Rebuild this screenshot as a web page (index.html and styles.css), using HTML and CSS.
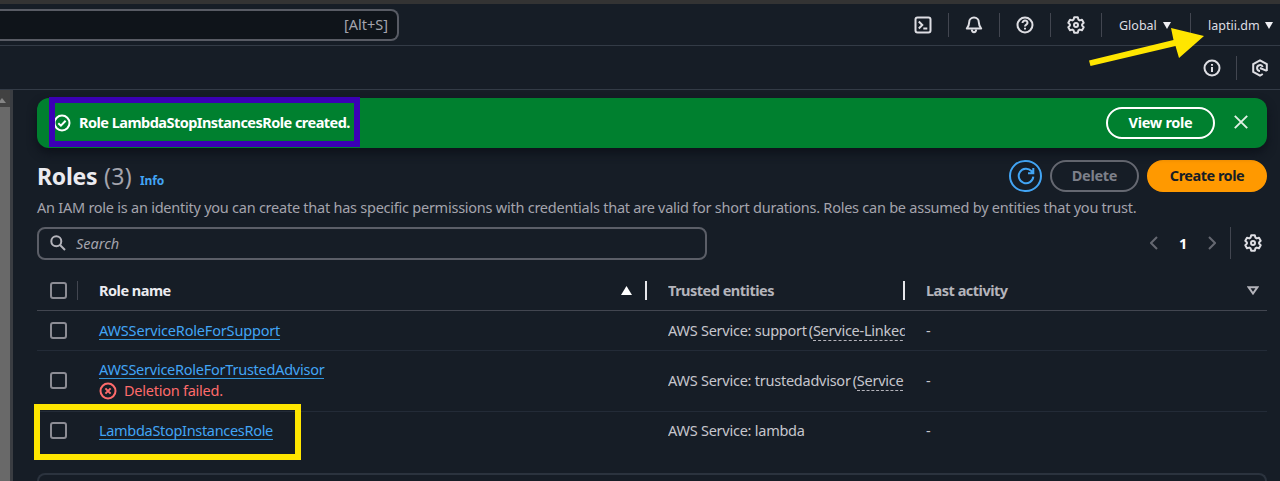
FILE: index.html
```
<!DOCTYPE html>
<html lang="en">
<head>
<meta charset="utf-8">
<title>Roles | IAM</title>
<link rel="stylesheet" href="styles.css">
</head>
<body>
<svg class="defs" width="0" height="0">
  <symbol id="gear" viewBox="0 0 18 18"><path d="M7.200 1.300h3.600l.6 2.300 1.300.8 2.300-.6 1.700 3-1.600 1.600v1.200l1.600 1.600-1.700 3-2.300-.6-1.300.8-.6 2.300H7.200l-.6-2.300-1.300-.8-2.300.6-1.700-3 1.600-1.600V8.400L1.300 6.800l1.700-3 2.300.6 1.300-.8z" stroke-linejoin="round"/><circle cx="9" cy="9" r="2"/></symbol>
</svg>
<div class="strip"></div>
<header class="nav">
  <div class="nav-search"><span>[Alt+S]</span></div>
  <div class="nav-items">
    <div class="nav-icon"><svg class="ico" viewBox="0 0 18 18"><rect x="1.500" y="1.500" width="15" height="15" rx="2"/><path d="M4.800 5.500 8.300 9l-3.500 3.500M9.300 12.500h4"/></svg></div>
    <div class="nav-icon"><svg class="ico" viewBox="0 0 18 18"><path d="M9 1.500c-2.900 0-4.800 2-4.800 4.700 0 3-.9 4.300-2.400 6.300h14.400c-1.500-2-2.400-3.300-2.400-6.300 0-2.700-1.900-4.700-4.800-4.700z" stroke-linejoin="round"/><path d="M6.800 13.500c.2 3.600 4.200 3.600 4.400 0"/></svg></div>
    <div class="nav-icon"><svg class="ico" viewBox="0 0 18 18"><circle cx="9" cy="9" r="7.500"/><path d="M6.500 7c0-3.300 5-3.200 5 0 0 1.700-2.500 1.500-2.500 3.500M9 11.700v1.800"/></svg></div>
    <div class="nav-icon"><svg class="ico"><use href="#gear"/></svg></div>
    <div class="nav-menu region"><span>Global</span><svg class="caret" viewBox="0 0 8 7"><path d="M0 0h8L4 7z"/></svg></div>
    <div class="nav-menu account"><span>laptii.dm</span><svg class="caret" viewBox="0 0 8 7"><path d="M0 0h8L4 7z"/></svg></div>
  </div>
</header>
<div class="subnav">
  <div class="sub-icon"><svg class="ico" viewBox="0 0 18 18"><circle cx="9" cy="9" r="7.500"/><path d="M9 8v5M9 5v1.800"/></svg></div>
  <div class="sub-icon last"><svg class="ico" viewBox="0 0 18 18"><path d="M15.800 12V5.200L9 1.400 2.200 5.200v7.600L9 16.600l2.800-1.600"/><path d="M11.700 8A2.900 2.900 0 1 0 9 11.900M9 9l6.800 2.800"/></svg></div>
</div>
<div class="body">
  <div class="scrollbar"><div class="sb-up"><svg viewBox="0 0 8 5"><path d="M0 5 4 0l4 5z"/></svg></div></div>
  <main>
    <section class="flash">
      <svg class="ico" viewBox="0 0 18 18"><circle cx="9" cy="9" r="7.500"/><path d="m5.300 9.200 2.600 2.500 4.700-5"/></svg>
      <span class="flash-text">Role LambdaStopInstancesRole created.</span>
      <button class="btn view"><span>View role</span></button>
      <svg class="close" viewBox="0 0 14 14"><path d="M.8.8l12.400 12.400M13.200.8.8 13.200"/></svg>
      <div class="mark-purple"></div>
    </section>
    <div class="head">
      <h1>Roles <span class="count">(3)</span></h1><a class="info">Info</a>
      <div class="actions">
        <button class="btn refresh"><svg viewBox="0 0 18 18"><path d="M16.300 9.600A7.300 7.300 0 1 1 14.400 4l1.800 2M16.300 1v5.300H11"/></svg></button>
        <button class="btn delete"><span>Delete</span></button>
        <button class="btn create"><span>Create role</span></button>
      </div>
    </div>
    <p class="desc"><span>An IAM role is an identity you can create that has specific permissions with credentials that are valid for short durations. Roles can be assumed by entities that you trust.</span></p>
    <div class="tools">
      <div class="search"><svg viewBox="0 0 16 16"><circle cx="6.300" cy="6.300" r="5"/><path d="m10 10 5 5"/></svg><span>Search</span></div>
      <div class="pager">
        <svg class="chev" viewBox="0 0 8 14"><path d="M7 1 1 7l6 6"/></svg>
        <span class="page">1</span>
        <svg class="chev" viewBox="0 0 8 14"><path d="m1 1 6 6-6 6"/></svg>
        <i class="rule"></i>
        <svg class="ico"><use href="#gear"/></svg>
      </div>
    </div>
    <div class="table">
      <div class="row th">
        <div class="c-check"><i class="box"></i><i class="bar dim"></i></div>
        <div class="c-name white"><span>Role name</span><svg class="sort" viewBox="0 0 11 9"><path d="M0 9 5.500 0 11 9z"/></svg><i class="bar"></i></div>
        <div class="c-trust"><span>Trusted entities</span><i class="bar"></i></div>
        <div class="c-last"><span>Last activity</span><svg class="filter" viewBox="0 0 12 9"><path d="M1.500 1.200h9L6 7.500z"/></svg></div>
      </div>
      <div class="row r1">
        <div class="c-check"><i class="box"></i></div>
        <div class="c-name"><a class="support">AWSServiceRoleForSupport</a></div>
        <div class="c-trust"><span>AWS Service: support</span><span class="paren">(<u>Service-Linked</u></span></div>
        <div class="c-last">-</div>
      </div>
      <div class="row r2">
        <div class="c-check"><i class="box"></i></div>
        <div class="c-name stack"><a>AWSServiceRoleForTrustedAdvisor</a>
          <div class="error"><svg class="ico" viewBox="0 0 18 18"><circle cx="9" cy="9" r="7.500"/><path d="m6.400 6.400 5.200 5.200M11.600 6.400l-5.200 5.200"/></svg><span>Deletion failed.</span></div></div>
        <div class="c-trust"><span>AWS Service: trustedadvisor</span><span class="paren">(<u>Service</u></span></div>
        <div class="c-last">-</div>
      </div>
      <div class="row r3">
        <div class="c-check"><i class="box"></i></div>
        <div class="c-name"><a class="lambda">LambdaStopInstancesRole</a></div>
        <div class="c-trust"><span>AWS Service: lambda</span></div>
        <div class="c-last">-</div>
        <div class="mark-yellow"></div>
      </div>
    </div>
    <section class="next-panel"></section>
  </main>
</div>
<svg class="arrow" viewBox="0 0 116 40"><path d="M0 34.500 84.500 14 82 2l33 8-25 22-3.500-12L1.500 40z"/></svg>
</body>
</html>
```
FILE: styles.css
```
* { box-sizing: border-box; }
body { margin: 0; width: 1280px; height: 481px; overflow: hidden; background: #161d26; color: #c6c6cd; font: 14.500px/20px "Noto Sans", "Open Sans", sans-serif; letter-spacing: -.245px; display: flex; flex-direction: column; position: relative; }
.defs { position: absolute; }
span, a { white-space: nowrap; }
svg { flex: none; fill: none; }
.ico { width: 18px; height: 18px; stroke: #dedee3; stroke-width: 2; }
.strip { height: 4px; background: #333; flex: none; }
.nav { height: 42px; flex: none; border-bottom: 1px solid #333b46; display: flex; justify-content: space-between; padding-top: 5px; }
.nav-search { width: 399px; height: 32px; border: 2px solid #585b64; border-left: 0; border-radius: 0 8px 8px 0; background: #0f141a; display: flex; align-items: center; justify-content: flex-end; padding: 0 9px 2px 0; color: #a4a4ad; letter-spacing: 0; }
.nav-items { display: flex; align-items: center; height: 32px; }
.nav-icon { width: 51px; height: 24px; border-right: 1px solid #424650; display: flex; align-items: center; justify-content: center; }
.nav-menu { display: flex; align-items: center; height: 24px; font-size: 12.500px; letter-spacing: 0; color: #dedee3; gap: 6px; }
.nav-menu span { margin-top: 1px; }
.region { width: 89px; padding-left: 17px; border-right: 1px solid #424650; }
.account { width: 89px; padding-left: 17px; gap: 5px; }
.caret { width: 8px; height: 7px; fill: #f0f0f4; }
.subnav { height: 44px; flex: none; border-bottom: 1px solid #333b46; display: flex; justify-content: flex-end; align-items: center; }
.sub-icon { width: 34px; height: 24px; border-right: 1px solid #424650; display: flex; align-items: center; }
.sub-icon.last { width: 43px; border: 0; padding-left: 14px; }
.body { flex: 1; display: flex; min-height: 0; }
.scrollbar { width: 13px; border-right: 3px solid #3a3d42; background: #696969; flex: none; }
.sb-up { height: 17px; background: #424242; display: flex; justify-content: flex-end; align-items: center; padding-right: 4px; overflow: hidden; }
.sb-up svg { width: 8px; height: 5px; fill: #858585; margin-top: 3px; }
main { flex: 1; padding: 8px 13px 0 24px; min-width: 0; display: flex; flex-direction: column; }
.flash { height: 50px; flex: none; border-radius: 12px; background: #00802f; display: flex; align-items: center; padding: 0 19px 2px 16px; color: #fff; font-weight: 700; letter-spacing: -.53px; position: relative; box-shadow: 0 5px 10px #0d121b; }
.flash .ico { stroke: #fff; margin-top: 1px; }
.flash-text { margin: -1px 0 0 8px; flex: 1; }
.mark-purple { position: absolute; left: 12px; top: -1px; width: 311px; height: 50px; border: 6px solid #3b00b5; }
.btn { height: 32px; border-radius: 16px; background: none; border: 2px solid; font: 700 14.500px/20px "Noto Sans", "Open Sans", sans-serif; letter-spacing: -.3px; padding: 0; display: flex; align-items: center; justify-content: center; flex: none; }
.view { width: 109px; color: #fff; margin-top: 1px; padding-bottom: 2px; }
.close { width: 14px; height: 14px; stroke: #e0f0e5; stroke-width: 1.900; margin-left: 19px; }
.head { display: flex; height: 32px; margin-top: 12px; align-items: center; flex: none; }
h1 { margin: 0; font-size: 23px; line-height: 30px; color: #ebebf0; font-weight: 700; letter-spacing: -.25px; }
.count { font-weight: 400; color: #a4a4ad; letter-spacing: .3px; margin-left: 1px; }
.info { font-size: 12px; font-weight: 700; color: #42a5f5; margin: 9px 0 0 8px; letter-spacing: -.1px; }
.actions { display: flex; gap: 8px; margin-left: auto; }
.refresh { width: 33px; color: #42a5f5; }
.refresh svg { width: 18px; height: 18px; stroke: currentColor; stroke-width: 2; }
.delete { width: 89px; color: #656871; }
.delete span { color: #7d808a; }
.create { width: 120px; background: #ff9900; border-color: #ff9900; color: #161d26; letter-spacing: -.5px; }
.head .btn.delete, .head .btn.create { padding-bottom: 2px; }
.desc { margin: 5px 0 10px; color: #a4a4ad; height: 20px; flex: none; }
.tools { display: flex; justify-content: space-between; flex: none; }
.search { width: 670px; height: 33px; border: 2px solid #5b5e67; border-radius: 8px; display: flex; align-items: center; padding: 0 0 2px 11px; font-style: italic; letter-spacing: 0; color: #a4a4ad; }
.search svg { width: 16px; height: 16px; stroke: #b4b4bb; stroke-width: 2; margin: 1px 10px 0 0; }
.pager { display: flex; align-items: center; padding: 0 5px 1px 0; }
.chev { width: 8px; height: 14px; stroke: #656871; stroke-width: 2; }
.page { width: 50px; text-align: center; font-weight: 700; color: #fff; padding-bottom: 1px; }
.rule { width: 1px; height: 32px; background: #424650; margin: 0 13px 0 14px; }
.table { padding-top: 11px; flex: none; }
.row { display: grid; grid-template-columns: 62px 569px 258px 1fr; align-items: center; position: relative; border-bottom: 1px solid #232b37; }
.th { height: 40px; border-color: #424650; font-weight: 700; letter-spacing: -.5px; color: #b4b4bb; }
.th span { margin-top: -2px; }
.r1 { height: 40px; }
.r1 .c-trust, .r1 .c-last { padding-bottom: 2px; }
.r2 { height: 61px; padding-bottom: 2px; }
.r3 { height: 38px; border: 0; padding-bottom: 2px; }
.c-check { display: flex; align-items: center; padding-left: 13px; gap: 10px; }
.box { width: 17px; height: 17px; border: 2px solid #8c8c94; border-radius: 3px; }
.bar { width: 2px; height: 19px; background: #e6e6ea; }
.bar.dim { width: 1px; background: #424650; }
.c-name { display: flex; align-items: center; }
.th .c-name { padding-right: 21px; }
.white { color: #ebebf0; }
.sort { width: 11px; height: 9px; fill: #fff; margin: 0 13px 0 auto; }
.c-trust { width: 237px; overflow: hidden; display: flex; align-items: center; height: 24px; }
.th .c-trust { justify-content: space-between; }
.c-last { display: flex; align-items: center; justify-content: space-between; padding-right: 8px; }
.filter { width: 12px; height: 9px; stroke: #b4b4bb; stroke-width: 2; }
.row a { color: #42a5f5; line-height: 18px; border-bottom: 1px solid #3295d8; }
.row .support { letter-spacing: -.17px; }
.row .lambda { letter-spacing: -.31px; }
.c-name.stack { flex-direction: column; align-items: flex-start; gap: 1px; }
.error { display: flex; align-items: center; gap: 7px; color: #ff6b6b; height: 20px; }
.error .ico { stroke: #ff6b6b; margin-top: 1px; }
.paren { margin-left: 2px; }
.paren u { text-decoration: none; border-bottom: 1px dashed #b4b4bb; }
.mark-yellow { position: absolute; left: -3px; top: -8px; width: 267px; height: 56px; border: 6px solid #ffe600; }
.next-panel { flex: 1; margin-top: 23px; border: 2px solid #2b333e; border-bottom: 0; border-radius: 16px 16px 0 0; }
.arrow { position: absolute; left: 1089px; top: 26px; width: 116px; height: 40px; fill: #ffe600; }
```
